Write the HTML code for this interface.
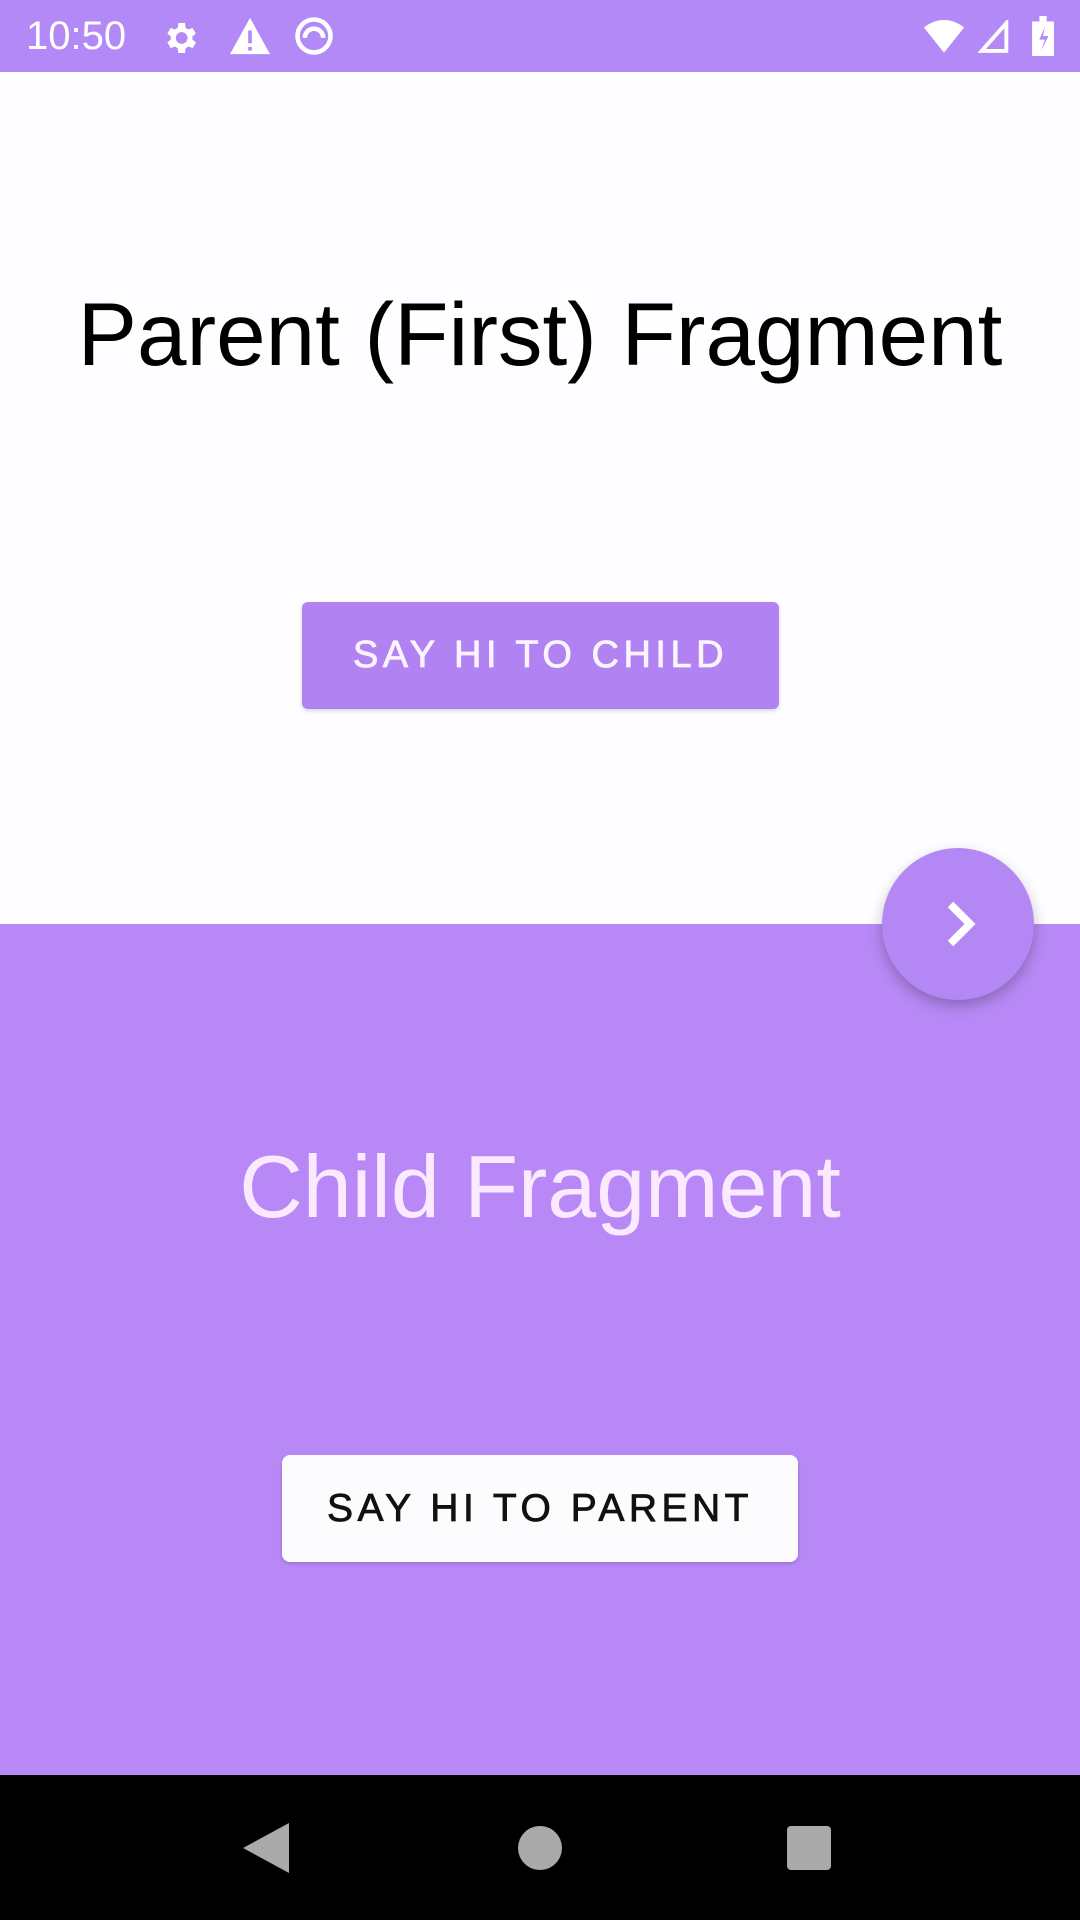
<!DOCTYPE html>
<html><head><meta charset="utf-8"><style>
*{margin:0;padding:0;box-sizing:border-box}
body{width:1080px;height:1920px;overflow:hidden;background:#fff;font-family:"Liberation Sans",sans-serif;position:relative}
.sb{position:absolute;left:0;top:0;width:1080px;height:72px;background:#b289f6;color:#fff}
.top{position:absolute;top:72px;left:0;width:1080px;height:852px;background:#fefdff}
.child{position:absolute;top:924px;left:0;width:1080px;height:851px;background:#b889f6}
.nav{position:absolute;top:1775px;left:0;width:1080px;height:145px;background:#000}
.t1{position:absolute;top:290px;left:0;width:1080px;text-align:center;font-size:89px;color:#000;line-height:1}
.b1{position:absolute;left:302px;top:602px;width:477px;height:107px;background:#b182f2;border-radius:6px;color:#fbf4ff;font-size:38px;letter-spacing:4.5px;text-align:center;line-height:107px;-webkit-text-stroke:0.8px #fbf4ff;box-shadow:0 2px 4px rgba(0,0,0,.15)}
.fab{position:absolute;left:882px;top:848px;width:152px;height:152px;border-radius:50%;background:#b488f4;box-shadow:0 6px 14px rgba(0,0,0,.25)}
.t2{position:absolute;top:1143px;left:0;width:1080px;text-align:center;font-size:88px;color:#fbe9ff;line-height:1}
.b2{position:absolute;left:282px;top:1455px;width:516px;height:107px;background:#fcfcfe;border-radius:8px;color:#111;font-size:39px;letter-spacing:4.5px;text-align:center;line-height:107px;-webkit-text-stroke:0.8px #111;box-shadow:0 2px 4px rgba(0,0,0,.15)}
</style></head><body>
<div class="sb">
<div style="position:absolute;left:26px;top:14px;font-size:40px;color:#fff">10:50</div>
<svg style="position:absolute;left:160px;top:18px" width="40" height="40" viewBox="0 0 24 24"><path fill="#fff" d="M19.4 13a7.5 7.5 0 0 0 0-2l2.1-1.6-2-3.5-2.5 1a7 7 0 0 0-1.7-1L15 3h-4l-.4 2.9a7 7 0 0 0-1.7 1l-2.5-1-2 3.5L6.5 11a7.5 7.5 0 0 0 0 2l-2.1 1.6 2 3.5 2.5-1a7 7 0 0 0 1.7 1L11 21h4l.4-2.9a7 7 0 0 0 1.7-1l2.5 1 2-3.5zM13 15.5a3.5 3.5 0 1 1 0-7 3.5 3.5 0 0 1 0 7z"/></svg>
<svg style="position:absolute;left:228px;top:16px" width="44" height="40" viewBox="0 0 24 22"><path fill="#fff" d="M12 1L1 21h22z"/><rect x="11" y="8" width="2" height="7" fill="#b289f6"/><rect x="11" y="17" width="2" height="2" fill="#b289f6"/></svg>
<svg style="position:absolute;left:292px;top:14px" width="44" height="44" viewBox="0 0 24 24"><circle cx="12" cy="12" r="9" fill="none" stroke="#fff" stroke-width="2.5"/><path d="M7 13a5 5 0 0 1 10 0" fill="none" stroke="#fff" stroke-width="2.5"/></svg>
<svg style="position:absolute;left:924px;top:18px" width="40" height="36" viewBox="0 0 24 20"><path fill="#fff" d="M0 5a18 18 0 0 1 24 0L12 20z"/></svg>
<svg style="position:absolute;left:978px;top:20px" width="32" height="34" viewBox="0 0 20 22"><path fill="none" stroke="#fff" stroke-width="2.5" d="M18 2v18H2z"/></svg>
<svg style="position:absolute;left:1032px;top:16px" width="22" height="40" viewBox="0 0 12 22"><rect x="0" y="3" width="12" height="19" fill="#fff"/><rect x="4" y="0" width="4" height="3" fill="#fff"/><path d="M7 6L4 13h3l-2 6 4-8H6z" fill="#b289f6"/></svg>
</div>
<div class="top"></div>
<div class="child"></div>
<div class="t1">Parent (First) Fragment</div>
<div class="b1">SAY HI TO CHILD</div>
<div class="fab"><svg style="position:absolute;left:40px;top:40px" width="72" height="72" viewBox="0 0 24 24"><path d="M9.5 5.5l6.5 6.5-6.5 6.5" fill="none" stroke="#fff" stroke-width="2.6"/></svg></div>
<div class="t2">Child Fragment</div>
<div class="b2">SAY HI TO PARENT</div>
<div class="nav">
<svg style="position:absolute;left:243px;top:48px" width="48" height="50" viewBox="0 0 24 25"><path d="M23 0v25L0 12.5z" fill="#aaa"/></svg>
<div style="position:absolute;left:518px;top:51px;width:44px;height:44px;border-radius:50%;background:#aaa"></div>
<div style="position:absolute;left:787px;top:51px;width:44px;height:44px;border-radius:4px;background:#aaa"></div>
</div>
</body></html>
